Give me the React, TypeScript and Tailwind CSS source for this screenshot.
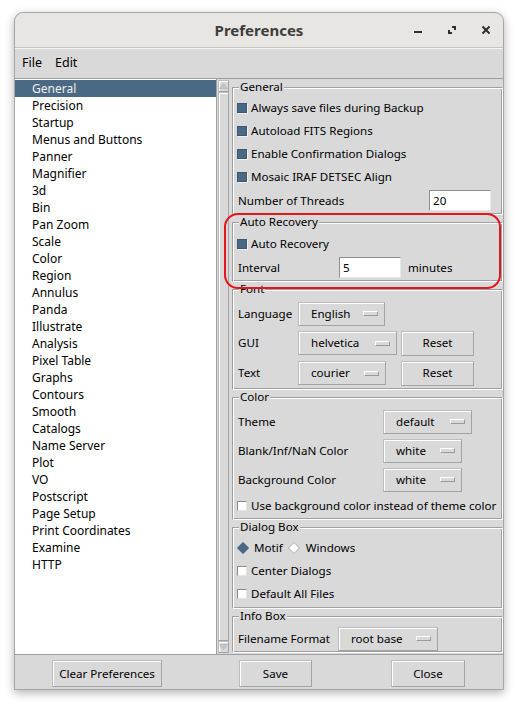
import type { ReactNode } from 'react'

const categories = [
  'General', 'Precision', 'Startup', 'Menus and Buttons', 'Panner', 'Magnifier', '3d', 'Bin',
  'Pan Zoom', 'Scale', 'Color', 'Region', 'Annulus', 'Panda', 'Illustrate', 'Analysis',
  'Pixel Table', 'Graphs', 'Contours', 'Smooth', 'Catalogs', 'Name Server', 'Plot', 'VO',
  'Postscript', 'Page Setup', 'Print Coordinates', 'Examine', 'HTTP',
]

// raised Tk-style border
const raised = 'border border-[#a3a3a3] border-t-[#bdbdbd] border-l-[#bdbdbd] shadow-[inset_1px_1px_0_#ffffff]'

function Check({ checked }: { checked?: boolean }) {
  return (
    <span
      className={
        checked
          ? 'inline-block h-[10px] w-[10px] shrink-0 border border-[#3c5873] bg-[#4a6984] shadow-[1px_1px_0_#f2f2f2]'
          : 'inline-block h-[10px] w-[10px] shrink-0 border border-[#8a8a8a] border-r-[#e6e6e6] border-b-[#e6e6e6] bg-white'
      }
    />
  )
}

function Diamond({ on }: { on?: boolean }) {
  return (
    <svg width="12" height="12" viewBox="0 0 12 12">
      <polygon
        points="6,0.5 11.5,6 6,11.5 0.5,6"
        fill={on ? '#4a6984' : '#ffffff'}
        stroke={on ? '#3c5873' : '#a8a8a8'}
        strokeWidth="1"
      />
    </svg>
  )
}

function Entry({ value, className = '' }: { value: string; className?: string }) {
  return (
    <div
      className={`flex h-[21px] w-[62px] items-center border border-[#8e8e8e] border-r-[#e8e8e8] border-b-[#e8e8e8] bg-white pl-[3px] ${className}`}
    >
      {value}
    </div>
  )
}

function MenuBtn({ label, width }: { label: string; width: string }) {
  return (
    <div className={`flex h-[24px] items-center justify-between bg-[#d9d9d9] pl-[12px] pr-[6px] ${raised} ${width}`}>
      <span>{label}</span>
      <span className="h-[5px] w-[15px] border border-[#9a9a9a] border-t-white border-l-white bg-[#d9d9d9]" />
    </div>
  )
}

function Btn({ label, width, className = '' }: { label: string; width: string; className?: string }) {
  return (
    <div className={`flex h-[25px] items-center justify-center bg-[#d9d9d9] ${raised} ${width} ${className}`}>
      {label}
    </div>
  )
}

function Group({ title, children, className = '' }: { title: string; children: ReactNode; className?: string }) {
  return (
    <fieldset
      className={`ml-[2px] min-w-0 border border-[#a0a0a0] border-r-white border-b-white pl-[4px] pr-[3px] shadow-[inset_1px_1px_0_#ffffff,inset_-1px_-1px_0_#a0a0a0] ${className}`}
    >
      <legend className="ml-[2px] bg-[#d9d9d9] px-[1px] leading-[14px]">{title}</legend>
      {children}
    </fieldset>
  )
}

function CheckRow({ label, checked }: { label: string; checked?: boolean }) {
  return (
    <div className="flex h-[23px] items-center gap-[4px]">
      <Check checked={checked} />
      <span>{label}</span>
    </div>
  )
}

export default function App() {
  return (
    <div className="min-h-[708px] whitespace-nowrap bg-white pl-[14px] pt-[12px] font-['Noto_Sans',sans-serif] text-[11.6px] text-black">
      <div className="relative w-[490px] rounded-t-[9px] border border-[#a6a6a6] bg-[#d9d9d9] shadow-[0_3px_10px_rgba(0,0,0,0.3)]">
        {/* Title bar */}
        <div className="flex h-[35px] items-center rounded-t-[9px] border-b border-[#c8c5c1] bg-[#e8e6e3]">
          <div className="w-[102px]" />
          <div className="flex-1 text-center text-[15px] font-bold text-[#3d3d3d]">Preferences</div>
          <div className="flex w-[102px]">
            <div className="flex h-[34px] w-[34px] items-center justify-center">
              <svg width="10" height="10" viewBox="0 0 10 10">
                <rect x="1" y="6" width="8" height="2" fill="#2e2e2e" />
              </svg>
            </div>
            <div className="flex h-[34px] w-[34px] items-center justify-center">
              <svg width="10" height="10" viewBox="0 0 10 10" fill="none" stroke="#2e2e2e" strokeWidth="2">
                <path d="M5 2h3v3M2 5v3h3" />
              </svg>
            </div>
            <div className="flex h-[34px] w-[34px] items-center justify-center">
              <svg width="10" height="10" viewBox="0 0 10 10" fill="none" stroke="#2e2e2e" strokeWidth="2">
                <path d="M1.5 1.5l7 7M8.5 1.5l-7 7" />
              </svg>
            </div>
          </div>
        </div>

        {/* Menu bar */}
        <div className="flex h-[31px] items-center gap-[13px] border-t border-t-[#f4f4f4] border-b border-b-[#9c9c9c] pl-[7px] text-[12.5px]">
          <span>File</span>
          <span>Edit</span>
        </div>

        {/* Main area */}
        <div className="flex h-[575px]">
          <div className="w-[201px] overflow-hidden bg-white pt-[1px] text-[12px]">
            {categories.map((c, i) => (
              <div
                key={c}
                className={`h-[17px] pl-[17px] leading-[17px] ${i === 0 ? 'bg-[#4a6984] text-[#f0f0f0]' : ''}`}
              >
                {c}
              </div>
            ))}
          </div>

          {/* Scrollbar */}
          <div className="flex w-[14px] flex-col border-l border-[#a0a0a0] bg-[#d9d9d9] p-[1px]">
            <div className={`flex h-[12px] items-center justify-center ${raised}`}>
              <svg width="9" height="6" viewBox="0 0 9 6">
                <polygon points="4.5,0.5 8.5,5.5 0.5,5.5" fill="#c6c6c6" stroke="#b0b0b0" strokeWidth="0.6" />
              </svg>
            </div>
            <div className={`flex-1 ${raised}`} />
            <div className={`flex h-[12px] items-center justify-center ${raised}`}>
              <svg width="9" height="6" viewBox="0 0 9 6">
                <polygon points="0.5,0.5 8.5,0.5 4.5,5.5" fill="#c6c6c6" stroke="#b0b0b0" strokeWidth="0.6" />
              </svg>
            </div>
          </div>

          {/* Settings panel */}
          <div className="flex-1 overflow-hidden pt-[1px]">
            <Group title="General" className="pb-[1px]">
              <div className="pt-[2px]">
                <CheckRow label="Always save files during Backup" checked />
                <CheckRow label="Autoload FITS Regions" checked />
                <CheckRow label="Enable Confirmation Dialogs" checked />
                <CheckRow label="Mosaic IRAF DETSEC Align" checked />
                <div className="flex h-[25px] items-center">
                  <span className="w-[192px] pl-[1px]">Number of Threads</span>
                  <Entry value="20" />
                </div>
              </div>
            </Group>

            <Group title="Auto Recovery" className="pb-[1px]">
              <div className="pt-[3px]">
                <CheckRow label="Auto Recovery" checked />
                <div className="flex h-[25px] items-center">
                  <span className="w-[102px] pl-[1px]">Interval</span>
                  <Entry value="5" />
                  <span className="ml-[7px]">minutes</span>
                </div>
              </div>
            </Group>

            <Group title="Font" className="pb-[1px]">
              <div className="grid grid-cols-[61px_103px_73px] pt-[3px]">
                <div className="flex h-[29px] items-center pl-[1px]">Language</div>
                <div className="flex h-[29px] items-center"><MenuBtn label="English" width="w-[87px]" /></div>
                <div />
                <div className="flex h-[30px] items-center pl-[1px]">GUI</div>
                <div className="flex h-[30px] items-center"><MenuBtn label="helvetica" width="w-[99px]" /></div>
                <div className="flex h-[30px] items-center"><Btn label="Reset" width="w-[73px]" /></div>
                <div className="flex h-[30px] items-center pl-[1px]">Text</div>
                <div className="flex h-[30px] items-center"><MenuBtn label="courier" width="w-[88px]" /></div>
                <div className="flex h-[30px] items-center"><Btn label="Reset" width="w-[73px]" /></div>
              </div>
            </Group>

            <Group title="Color" className="pb-[2px]">
              <div className="pt-[3px]">
                <div className="flex h-[29px] items-center">
                  <span className="w-[146px] pl-[1px]">Theme</span>
                  <MenuBtn label="default" width="w-[89px]" />
                </div>
                <div className="flex h-[29px] items-center">
                  <span className="w-[146px] pl-[1px]">Blank/Inf/NaN Color</span>
                  <MenuBtn label="white" width="w-[79px]" />
                </div>
                <div className="flex h-[29px] items-center">
                  <span className="w-[146px] pl-[1px]">Background Color</span>
                  <MenuBtn label="white" width="w-[79px]" />
                </div>
                <CheckRow label="Use background color instead of theme color" />
              </div>
            </Group>

            <Group title="Dialog Box" className="pb-[3px]">
              <div className="pt-[2px]">
                <div className="flex h-[23px] items-center">
                  <Diamond on />
                  <span className="ml-[5px]">Motif</span>
                  <span className="ml-[5px]"><Diamond /></span>
                  <span className="ml-[6px]">Windows</span>
                </div>
                <CheckRow label="Center Dialogs" />
                <CheckRow label="Default All Files" />
              </div>
            </Group>

            <Group title="Info Box" className="pb-[1px]">
              <div className="flex h-[28px] items-center pt-[3px]">
                <span className="w-[101px] pl-[1px]">Filename Format</span>
                <MenuBtn label="root base" width="w-[100px]" />
              </div>
            </Group>
          </div>
        </div>

        {/* Bottom buttons */}
        <div className="flex h-[35px] items-start border-t border-[#a0a0a0] pl-[37px] pt-[5px]">
          <Btn label="Clear Preferences" width="w-[110px]" className="h-[27px]" />
          <Btn label="Save" width="w-[73px]" className="ml-[77px] h-[27px]" />
          <Btn label="Close" width="w-[74px]" className="ml-[79px] h-[27px]" />
        </div>

        {/* Red annotation around Auto Recovery */}
        <div className="pointer-events-none absolute left-[209px] top-[200px] h-[76px] w-[277px] rounded-[14px] border-2 border-[#e3161d]" />
      </div>
    </div>
  )
}
